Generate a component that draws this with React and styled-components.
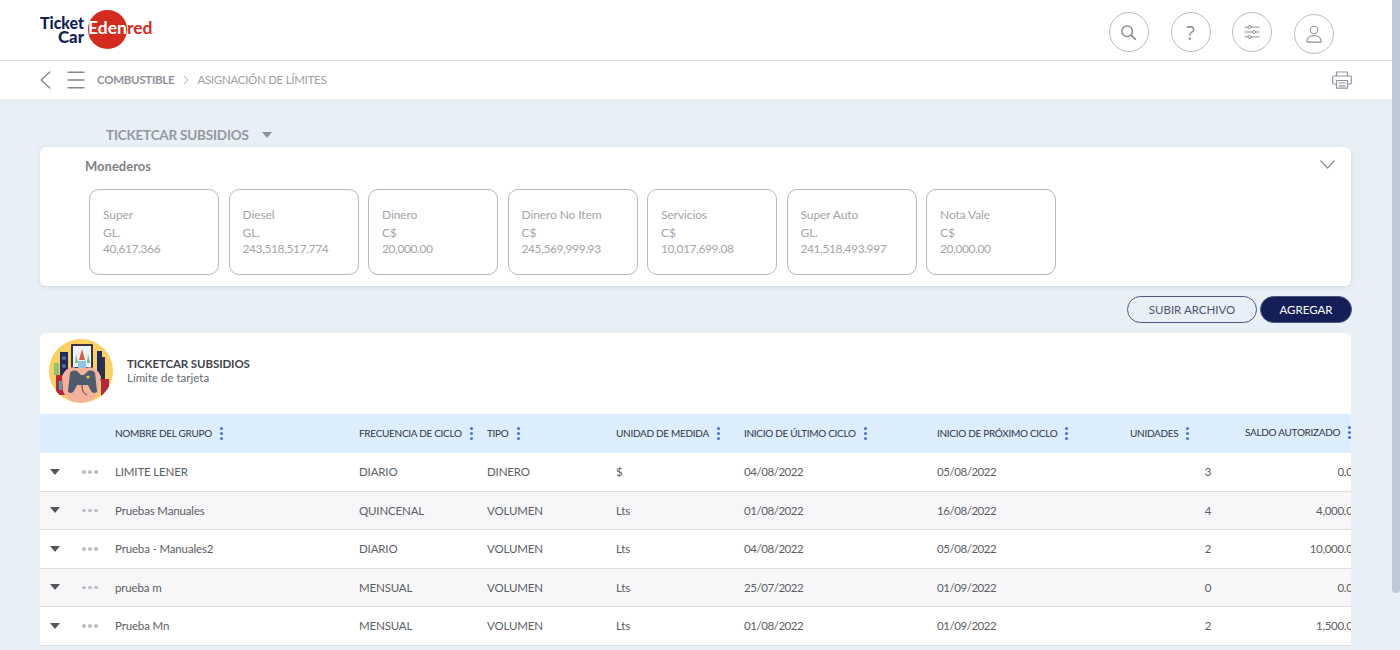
import React from "react";
import styled, { createGlobalStyle } from "styled-components";

const Global = createGlobalStyle`
  html, body { margin: 0; padding: 0; height: 100%; overflow: hidden; }
  body { font-family: Lato, "Open Sans", sans-serif; background: #e8eff7; color: #555; }
  * { box-sizing: border-box; }
`;

const Page = styled.div`
  height: 100vh;
  display: flex;
  overflow: hidden;
  background: #e8eff7;
`;
const Content = styled.div`
  flex: 1;
  min-width: 0;
`;
const ScrollTrack = styled.div`
  width: 8px;
  flex: none;
  background: #e8eff7;
`;
const ScrollThumb = styled.div`
  height: 593px;
  background: #bfc8d6;
  border-radius: 0 0 4px 4px;
`;
const TopBar = styled.header`
  height: 61px;
  background: #fff;
  border-bottom: 1px solid #dfe0e2;
  padding: 0 58px 0 40px;
  display: flex;
  align-items: center;
  justify-content: space-between;
`;
const Logo = styled.svg`
  width: 115px;
  height: 44px;
  display: block;
  margin-top: -3px;
`;
const Actions = styled.div`
  display: flex;
  gap: 21.7px;
  align-items: center;
  margin-top: 4px;
`;
const RoundButton = styled.button`
  width: 40px;
  height: 40px;
  border-radius: 50%;
  border: 1px solid #bdbdbd;
  background: #fff;
  padding: 0;
  display: flex;
  align-items: center;
  justify-content: center;
  color: #8c8f94;
  font-family: "Open Sans", sans-serif;
  font-size: 20px;
  font-weight: 400;
  margin-top: ${(p) => p.$drop || 0}px;
`;
const SubBar = styled.div`
  height: 38px;
  background: #fff;
  padding: 0 40px;
  width: 100%;
  display: flex;
  align-items: center;
`;
const IconSlot = styled.svg`
  display: block;
  flex: none;
`;
const MenuIcon = styled(IconSlot)`
  margin-left: 16px;
`;
const FoldIcon = styled(IconSlot)`
  margin-top: -3px;
`;
const Crumbs = styled.nav`
  display: flex;
  align-items: center;
  font-size: 11.5px;
  letter-spacing: -0.28px;
  color: #9c9fa5;
  margin: -1px 0 0 12px;
`;
const CrumbStrong = styled.span`
  font-weight: 700;
  color: #8f9298;
`;
const CrumbSep = styled.svg`
  margin: 0 8.5px;
`;
const PrintSlot = styled.div`
  margin-left: auto;
`;
const Main = styled.main`
  padding: 25px 41px 0 40px;
`;
const Selector = styled.div`
  display: flex;
  align-items: center;
  gap: 13px;
  padding-left: 66px;
  height: 23px;
  padding-bottom: 1px;
  font-size: 13.5px;
  letter-spacing: -0.2px;
  font-weight: 700;
  color: #94989f;
`;
const Caret = styled.span`
  width: 0;
  height: 0;
  border-left: 5.5px solid transparent;
  border-right: 5.5px solid transparent;
  border-top: 6px solid ${(p) => p.$color || "#8d9198"};
  display: block;
`;
const WalletCard = styled.section`
  height: 139px;
  background: #fff;
  border-radius: 6px;
  box-shadow: 0 1px 4px rgba(90, 110, 140, 0.18);
  padding: 10px 16px 0 45px;
`;
const WalletHead = styled.div`
  display: flex;
  justify-content: space-between;
  align-items: center;
  height: 18px;
  font-size: 13px;
  font-weight: 700;
  color: #7f8389;
`;
const WalletRow = styled.div`
  display: flex;
  gap: 9.5px;
  margin: 14px 0 0 4px;
`;
const Wallet = styled.div`
  width: 130px;
  height: 86px;
  border: 1px solid #b9b9b9;
  border-radius: 10px;
  padding: 17px 0 0 13px;
  font-size: 12px;
  letter-spacing: -0.1px;
  color: #a2a5a9;
  line-height: 16px;
`;
const WalletName = styled.div`
  margin-bottom: 1.5px;
`;
const WalletValue = styled.div`
  letter-spacing: -0.4px;
`;
const ButtonRow = styled.div`
  display: flex;
  justify-content: flex-end;
  gap: 3px;
  margin: 10px -1px 10px 0;
`;
const Pill = styled.button`
  height: 27px;
  width: ${(p) => p.$w}px;
  border-radius: 14px;
  font-family: Lato, sans-serif;
  font-size: 11.5px;
  padding: 0;
  border: 1px solid #4e5680;
  color: ${(p) => (p.$solid ? "#fff" : "#4e5570")};
  background: ${(p) => (p.$solid ? "#141f57" : "transparent")};
`;
const TableCard = styled.section`
  background: #fff;
  border-radius: 6px 6px 0 0;
  overflow: hidden;
`;
const Intro = styled.div`
  height: 81px;
  display: flex;
  align-items: flex-start;
  padding: 6px 0 0 9px;
  gap: 14px;
`;
const Avatar = styled.svg`
  width: 64px;
  height: 64px;
  flex: none;
`;
const IntroText = styled.div`
  margin-top: 18px;
`;
const IntroTitle = styled.div`
  font-size: 11.5px;
  font-weight: 700;
  letter-spacing: -0.1px;
  color: #3f434a;
  line-height: 14px;
`;
const IntroSub = styled.div`
  font-size: 11.5px;
  color: #666a70;
  line-height: 14px;
`;
const Row = styled.div`
  display: grid;
  grid-template-columns: 75px 244px 128px 129px 128px 193px 193px 90px 146px;
  align-items: center;
  width: 1326px;
`;
const HeadRow = styled(Row)`
  height: 39px;
  background: #dcedfd;
`;
const HeadCell = styled.div`
  display: flex;
  align-items: center;
  gap: 8px;
  font-size: 10px;
  letter-spacing: -0.3px;
  color: #32363d;
  white-space: nowrap;
  padding-left: ${(p) => p.$pad || 0}px;
  padding-bottom: ${(p) => p.$lift || 1}px;
`;
const Kebab = styled.span`
  display: flex;
  flex-direction: column;
  gap: 2px;
  & > i { width: 3px; height: 3px; border-radius: 50%; background: #4a72d4; display: block; }
`;
const BodyRow = styled(Row)`
  height: 38.5px;
  border-bottom: 1px solid #dddee0;
  background: ${(p) => (p.$odd ? "#f7f7f9" : "#fff")};
  font-size: 11.5px;
  letter-spacing: -0.15px;
  color: #5b5e63;
`;
const Tools = styled.div`
  display: flex;
  align-items: center;
  padding-left: 10px;
  gap: 22px;
`;
const Dots = styled.span`
  display: flex;
  gap: 2px;
  & > i { width: 4px; height: 3.5px; border-radius: 50%; background: #bcbec2; display: block; }
`;
const DateCell = styled.div`
  letter-spacing: -0.45px;
`;
const Num = styled.div`
  text-align: right;
  letter-spacing: -0.3px;
  padding-right: ${(p) => p.$pad}px;
`;

const wallets = [
  ["Super", "GL.", "40,617.366"],
  ["Diesel", "GL.", "243,518,517.774"],
  ["Dinero", "C$", "20,000.00"],
  ["Dinero No Item", "C$", "245,569,999.93"],
  ["Servicios", "C$", "10,017,699.08"],
  ["Super Auto", "GL.", "241,518,493.997"],
  ["Nota Vale", "C$", "20,000.00"],
];
const rows = [
  ["LIMITE LENER", "DIARIO", "DINERO", "$", "04/08/2022", "05/08/2022", "3", "0.00"],
  ["Pruebas Manuales", "QUINCENAL", "VOLUMEN", "Lts", "01/08/2022", "16/08/2022", "4", "4,000.00"],
  ["Prueba - Manuales2", "DIARIO", "VOLUMEN", "Lts", "04/08/2022", "05/08/2022", "2", "10,000.00"],
  ["prueba m", "MENSUAL", "VOLUMEN", "Lts", "25/07/2022", "01/09/2022", "0", "0.00"],
  ["Prueba Mn", "MENSUAL", "VOLUMEN", "Lts", "01/08/2022", "01/09/2022", "2", "1,500.00"],
];
const heads = ["NOMBRE DEL GRUPO", "FRECUENCIA DE CICLO", "TIPO", "UNIDAD DE MEDIDA", "INICIO DE ÚLTIMO CICLO", "INICIO DE PRÓXIMO CICLO", "UNIDADES"];

const KebabDots = () => (
  <Kebab><i /><i /><i /></Kebab>
);

const stroke = { fill: "none", stroke: "currentColor", strokeLinecap: "round", strokeLinejoin: "round" };

export default function App() {
  return (
    <Page>
      <Global />
      <Content>
        <TopBar>
          <Logo viewBox="0 0 115 44" aria-label="Ticket Car Edenred">
            <circle cx="67.5" cy="22.5" r="19.6" fill="#d52b1e" />
            <text x="0" y="21.5" fontFamily="Lato, sans-serif" fontWeight="900" fontSize="16" fill="#141f57" textLength="44" lengthAdjust="spacingAndGlyphs">Ticket</text>
            <text x="18" y="35.5" fontFamily="Lato, sans-serif" fontWeight="900" fontSize="16" fill="#141f57" textLength="26" lengthAdjust="spacingAndGlyphs">Car</text>
            <text x="48" y="26.8" fontFamily="Lato, sans-serif" fontWeight="700" fontSize="16.5" textLength="64.5" lengthAdjust="spacingAndGlyphs">
              <tspan fill="#fff">Eden</tspan><tspan fill="#d52b1e">red</tspan>
            </text>
          </Logo>
          <Actions>
            <RoundButton aria-label="Buscar">
              <IconSlot width="17" height="17" viewBox="0 0 18 18" {...stroke} strokeWidth="1.6">
                <circle cx="7.6" cy="7.6" r="5.6" />
                <path d="M11.8 11.8 16 16" strokeWidth="2" />
              </IconSlot>
            </RoundButton>
            <RoundButton aria-label="Ayuda">?</RoundButton>
            <RoundButton aria-label="Ajustes">
              <IconSlot width="16" height="16" viewBox="0 0 18 18" {...stroke} strokeWidth="1.1">
                <path d="M1 3.5h3.6M8 3.5h9M1 9h8.6M13 9h4M1 14.5h3.6M8 14.5h9" />
                <circle cx="6.2" cy="3.5" r="1.7" />
                <circle cx="11.3" cy="9" r="1.7" />
                <circle cx="6.2" cy="14.5" r="1.7" />
              </IconSlot>
            </RoundButton>
            <RoundButton aria-label="Perfil" $drop={3}>
              <IconSlot width="18" height="18" viewBox="0 0 18 18" {...stroke} strokeWidth="1.1">
                <circle cx="9" cy="5" r="3.7" />
                <path d="M1.8 16.6c0-3.6 3-6 7.2-6s7.2 2.4 7.2 6c0 .3-.2.5-.5.5H2.3c-.3 0-.5-.2-.5-.5Z" />
              </IconSlot>
            </RoundButton>
          </Actions>
        </TopBar>
        <SubBar>
          <IconSlot width="11" height="18" viewBox="0 0 11 18" color="#85888e" {...stroke} strokeWidth="1.5">
            <path d="M9.8 1 1.2 9l8.6 8" />
          </IconSlot>
          <MenuIcon width="18" height="18" viewBox="0 0 18 18" color="#85888e" {...stroke} strokeWidth="1.4">
            <path d="M.5 1.2h17M.5 9h17M.5 16.8h17" strokeLinecap="butt" />
          </MenuIcon>
          <Crumbs>
            <CrumbStrong>COMBUSTIBLE</CrumbStrong>
            <CrumbSep width="6" height="10" viewBox="0 0 6 10" color="#a2a5a9" {...stroke} strokeWidth="1">
              <path d="M1 1l4 4-4 4" />
            </CrumbSep>
            <span>ASIGNACIÓN DE LÍMITES</span>
          </Crumbs>
          <PrintSlot>
            <IconSlot width="20" height="18" viewBox="0 0 20 18" color="#9195a0" {...stroke} strokeWidth="1.2">
              <path d="M4.5 5V1h11v4" />
              <path d="M4.5 13H2a1.3 1.3 0 0 1-1.3-1.3V6.3A1.3 1.3 0 0 1 2 5h16a1.3 1.3 0 0 1 1.3 1.3v5.4A1.3 1.3 0 0 1 18 13h-2.5" />
              <rect x="4.5" y="9.5" width="11" height="7.7" />
              <path d="M7 12h6M7 14.8h6" />
            </IconSlot>
          </PrintSlot>
        </SubBar>
        <Main>
          <Selector>
            TICKETCAR SUBSIDIOS <Caret />
          </Selector>
          <WalletCard>
            <WalletHead>
              Monederos
              <FoldIcon width="15" height="9" viewBox="0 0 15 9" color="#85888e" {...stroke} strokeWidth="1.2">
                <path d="M.7.8 7.5 8 14.3.8" />
              </FoldIcon>
            </WalletHead>
            <WalletRow>
              {wallets.map(([n, u, v]) => (
                <Wallet key={n}>
                  <WalletName>{n}</WalletName>
                  <div>{u}</div>
                  <WalletValue>{v}</WalletValue>
                </Wallet>
              ))}
            </WalletRow>
          </WalletCard>
          <ButtonRow>
            <Pill $w={130}>SUBIR ARCHIVO</Pill>
            <Pill $w={92} $solid>AGREGAR</Pill>
          </ButtonRow>
          <TableCard>
            <Intro>
              <Avatar viewBox="0 0 64 64" aria-hidden="true">
                <defs>
                  <clipPath id="avatarClip"><circle cx="32" cy="32" r="32" /></clipPath>
                </defs>
                <g clipPath="url(#avatarClip)">
                  <rect width="64" height="64" fill="#fad063" />
                  <rect x="11" y="13" width="8" height="24" fill="#232b5e" />
                  <circle cx="15" cy="19" r="2" fill="#5a6aa0" />
                  <circle cx="15" cy="27" r="2" fill="#5a6aa0" />
                  <rect x="48" y="12" width="5" height="30" fill="#232b5e" />
                  <rect x="52" y="18" width="4" height="24" fill="#2a3050" />
                  <rect x="7" y="36" width="10" height="20" fill="#b8263a" />
                  <rect x="52" y="40" width="8" height="18" fill="#b8263a" />
                  <rect x="5" y="24" width="5" height="12" fill="#8fc46c" />
                  <rect x="10" y="42" width="3" height="9" fill="#3fa9b5" />
                  <rect x="22" y="5" width="22" height="25" rx="1" fill="#3d3340" />
                  <rect x="24" y="7" width="18" height="21" fill="#eaf3f6" />
                  <path d="M33 10l3 11h-6Z" fill="#d9574f" />
                  <path d="M27 15l2 9h-3ZM39 15l2 9h-3Z" fill="#6cbf84" />
                  <rect x="29" y="22" width="8" height="8" fill="#8fc4df" />
                  <path d="M13 38c3-9 10-11 14-9l10 0c5-2 12 0 15 9l-2 14c-3 8-10 12-18 12s-15-4-18-12Z" fill="#f4b299" />
                  <path d="M21 34c2-3 6-3 8-1l3 3h3l3-3c2-2 6-2 8 1l2 18c0 2-4 3-6 0l-3-6h-11l-3 6c-2 3-6 2-6 0Z" fill="#4c5b6d" />
                  <circle cx="39" cy="38" r="1.6" fill="#f0cf3a" />
                  <path d="M33 46c0 5 1 8 5 10" fill="none" stroke="#3a3340" strokeWidth="0.9" />
                </g>
              </Avatar>
              <IntroText>
                <IntroTitle>TICKETCAR SUBSIDIOS</IntroTitle>
                <IntroSub>Límite de tarjeta</IntroSub>
              </IntroText>
            </Intro>
            <HeadRow>
              <div />
              {heads.map((h) => (
                <HeadCell key={h}>
                  {h}
                  <KebabDots />
                </HeadCell>
              ))}
              <HeadCell $pad={25} $lift={3}>
                SALDO AUTORIZADO
                <KebabDots />
              </HeadCell>
            </HeadRow>
            {rows.map((r, i) => (
              <BodyRow key={r[0]} $odd={i % 2 === 1}>
                <Tools>
                  <Caret $color="#54575c" />
                  <Dots><i /><i /><i /></Dots>
                </Tools>
                <div>{r[0]}</div>
                <div>{r[1]}</div>
                <div>{r[2]}</div>
                <div>{r[3]}</div>
                <DateCell>{r[4]}</DateCell>
                <DateCell>{r[5]}</DateCell>
                <Num $pad={9}>{r[6]}</Num>
                <Num $pad={7}>{r[7]}</Num>
              </BodyRow>
            ))}
          </TableCard>
        </Main>
      </Content>
      <ScrollTrack>
        <ScrollThumb />
      </ScrollTrack>
    </Page>
  );
}
